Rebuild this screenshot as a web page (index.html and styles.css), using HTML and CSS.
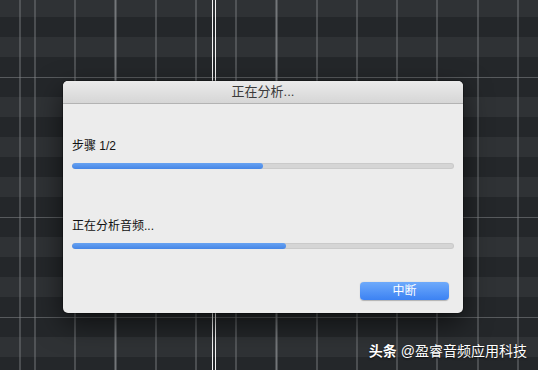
FILE: index.html
```html
<!DOCTYPE html>
<html lang="zh-CN">
<head>
<meta charset="utf-8">
<title>正在分析...</title>
<link rel="stylesheet" href="styles.css">
</head>
<body>
<div class="canvas">
  <div class="rows">
    <div class="row light first"></div>
    <div class="row dark"></div>
    <div class="row light"></div>
    <div class="row dark"></div>
    <div class="hline"></div>
    <div class="row dark short"></div>
    <div class="row light"></div>
    <div class="row dark"></div>
    <div class="row light"></div>
    <div class="row dark"></div>
    <div class="row light"></div>
    <div class="row dark"></div>
    <div class="hline"></div>
    <div class="row dark short"></div>
    <div class="row light"></div>
    <div class="row dark"></div>
    <div class="row light"></div>
    <div class="row dark"></div>
    <div class="hline"></div>
    <div class="row dark short"></div>
    <div class="row light"></div>
    <div class="row dark last"></div>
  </div>
  <div class="grid"></div>
  <div class="playhead"></div>

  <div class="dialog">
    <div class="titlebar">正在分析...</div>
    <div class="body">
      <div class="label">步骤 1/2</div>
      <div class="track"><div class="fill" style="width:50%"></div></div>
      <div class="label second">正在分析音频...</div>
      <div class="track"><div class="fill" style="width:56%"></div></div>
      <div class="actions">
        <button class="btn">中断</button>
      </div>
    </div>
  </div>

  <div class="watermark"><b>头条</b>@盈睿音频应用科技</div>
</div>
</body>
</html>
```

FILE: styles.css
```css
* { box-sizing: border-box; }

html, body {
  margin: 0;
  padding: 0;
  background: #24272a;
}

.canvas {
  position: relative;
  width: 538px;
  height: 370px;
  overflow: hidden;
  font-family: "Liberation Sans", "Noto Sans CJK SC", sans-serif;
}

.rows {
  display: flex;
  flex-direction: column;
}

.row { height: 20px; }
.row.first { height: 17px; }
.row.short { height: 19px; }
.row.last { height: 13px; }
.row.light { background: #2f3235; }
.row.dark { background: #24272a; }

.hline {
  height: 1px;
  background: #575a5d;
}

.grid {
  position: absolute;
  inset: 0;
  background-image: repeating-linear-gradient(to right, #85888b 0, #85888b 1px, transparent 1px, transparent 40.25px);
  background-position: 34.5px 0;
  opacity: 0.8;
}

.playhead {
  position: absolute;
  top: 0;
  bottom: 0;
  left: 212px;
  width: 4px;
  border-left: 1px solid #f4f4f4;
  border-right: 1px solid #f4f4f4;
}

.dialog {
  position: absolute;
  left: 63px;
  top: 81px;
  width: 400px;
  height: 232px;
  background: #ececec;
  border-radius: 5px;
  overflow: hidden;
  box-shadow: 0 10px 28px rgba(0, 0, 0, 0.6), 0 0 0 1px rgba(0, 0, 0, 0.25);
}

.titlebar {
  height: 23px;
  line-height: 22px;
  text-align: center;
  font-size: 13px;
  color: #3a3a3a;
  background: linear-gradient(#ebebeb, #d6d6d6);
  border-bottom: 1px solid #b3b3b3;
}

.body {
  display: flex;
  flex-direction: column;
  padding: 34px 9px 13px 9px;
}

.label {
  font-size: 12px;
  line-height: 16px;
  height: 16px;
  color: #111;
}

.label.second { margin-top: 49px; }

.track {
  margin-top: 9px;
  height: 6px;
  border-radius: 3px;
  background: #d5d5d5;
  box-shadow: inset 0 0 0 1px rgba(0, 0, 0, 0.05);
  overflow: hidden;
}

.fill {
  height: 100%;
  border-radius: 3px;
  background: linear-gradient(#67a2f2, #4686e6);
}

.actions {
  display: flex;
  justify-content: flex-end;
  margin-top: 33px;
  padding-right: 5px;
}

.btn {
  width: 89px;
  height: 18px;
  padding: 0;
  border: 0;
  border-radius: 4px;
  background: linear-gradient(#6eaafb, #3c82f3);
  box-shadow: 0 0.5px 1px rgba(0, 0, 0, 0.25);
  color: #ffffff;
  font-family: "Liberation Sans", "Noto Sans CJK SC", sans-serif;
  font-size: 12px;
  line-height: 18px;
}

.watermark {
  position: absolute;
  right: 11px;
  bottom: 9px;
  font-size: 14px;
  line-height: 20px;
  color: #ffffff;
  text-shadow: 0 1px 2px rgba(0, 0, 0, 0.7);
}

.watermark b {
  font-weight: 700;
  margin-right: 4px;
}
```
